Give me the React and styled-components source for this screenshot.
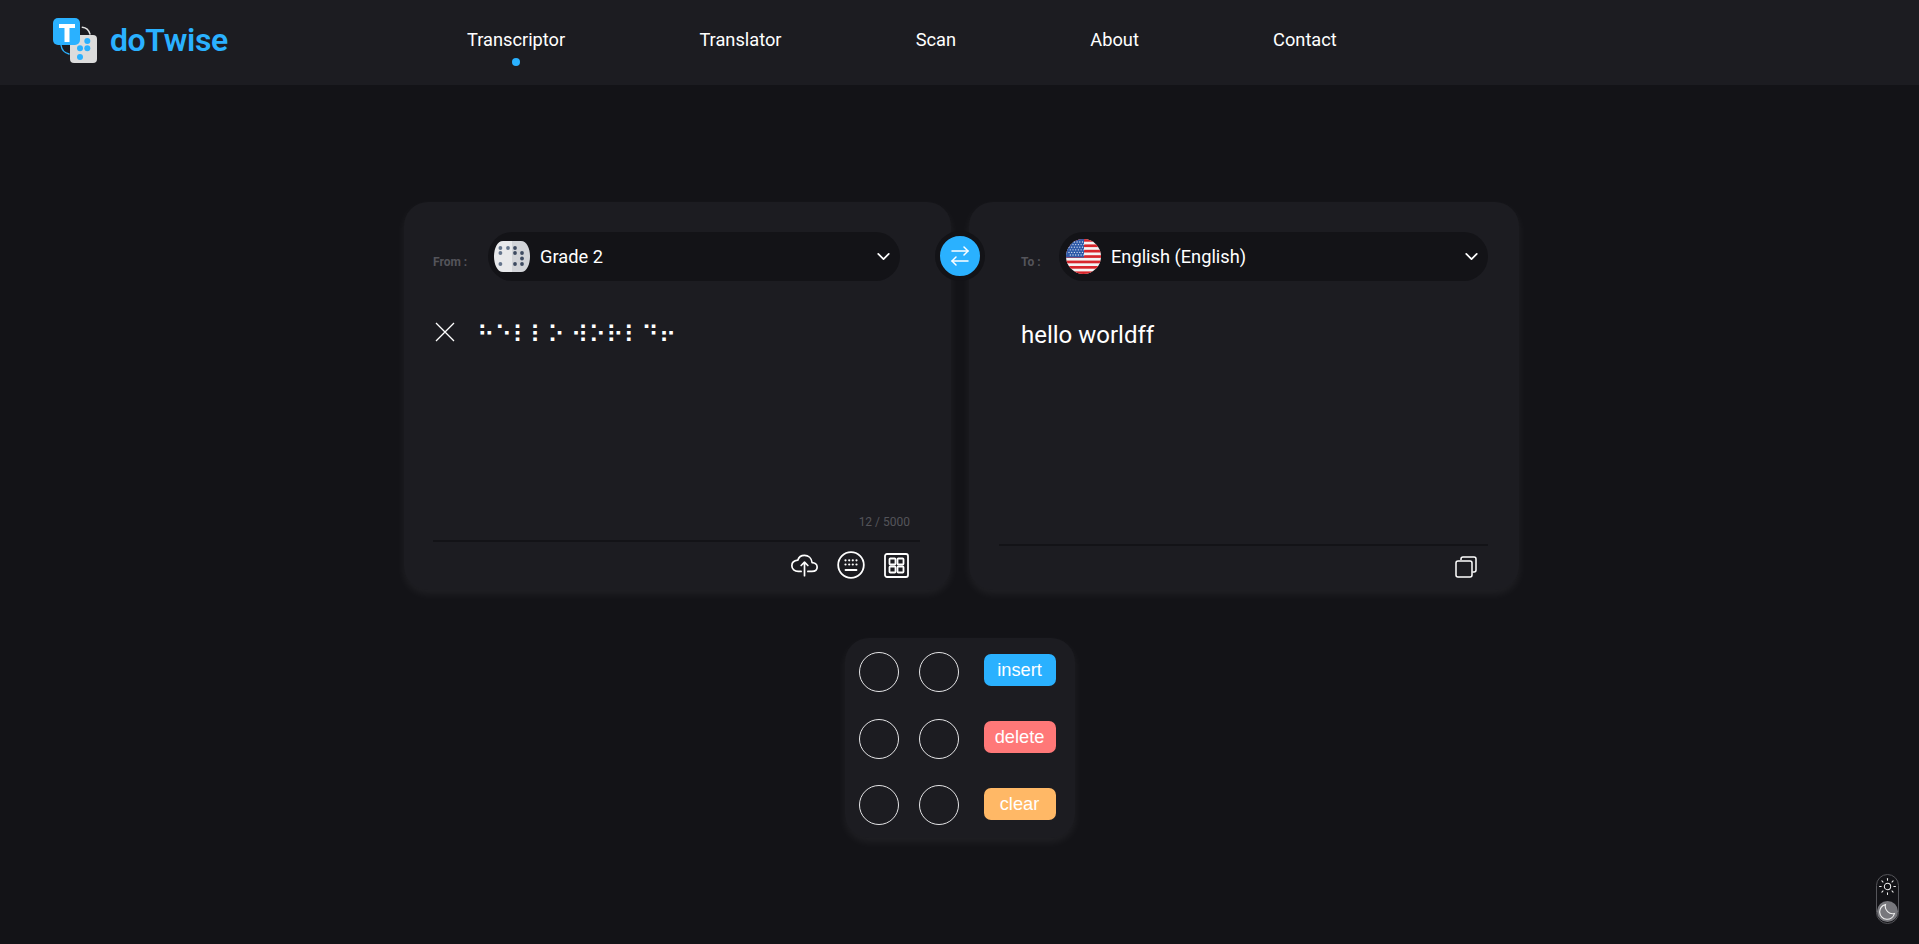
import React from "react";
import styled, { createGlobalStyle } from "styled-components";
import { ArrowRightLeft, ChevronDown, Sun } from "lucide-react";
import { IoCloudUploadOutline } from "react-icons/io5";

const GlobalStyle = createGlobalStyle`
  html, body {
    margin: 0;
    padding: 0;
    background: #131317;
    overflow: hidden;
  }
  * {
    box-sizing: border-box;
  }
  body {
    font-family: Roboto, "Liberation Sans", sans-serif;
    color: #fff;
  }
`;

const Page = styled.div`
  min-height: 944px;
  display: flex;
  flex-direction: column;
  align-items: stretch;
`;

const Header = styled.header`
  height: 85px;
  background: #1c1c21;
  display: flex;
  align-items: center;
  padding-left: 53px;
`;

const Brand = styled.div`
  display: flex;
  align-items: center;
  gap: 12px;
  width: 414px;
  margin-top: -4px;
`;

const BrandName = styled.span`
  font-size: 32px;
  font-weight: 600;
  letter-spacing: -0.4px;
  margin-top: -2px;
  color: #2ab1ff;
`;

const Nav = styled.nav`
  display: flex;
  gap: 134.2px;
`;

const NavLink = styled.a`
  position: relative;
  font-size: 18.24px;
  line-height: 24px;
  margin-top: -6px;
  color: #fff;

  ${(p) =>
    p.$active &&
    `
    &::after {
      content: "";
      position: absolute;
      left: 50%;
      top: 30px;
      width: 8px;
      height: 8px;
      margin-left: -4px;
      border-radius: 50%;
      background: #2ab1ff;
    }
  `}
`;

const Main = styled.main`
  display: flex;
  flex-direction: column;
  align-items: center;
  padding-top: 117px;
`;

const Panels = styled.section`
  position: relative;
  display: flex;
  gap: 18px;
  margin-left: 4px;
`;

const Card = styled.div`
  background: #1c1c21;
  border-radius: 24px;
  box-shadow: 0 4px 10px rgba(255, 255, 255, 0.06);
`;

const Panel = styled(Card)`
  width: ${(p) => p.$width}px;
  height: 388px;
  padding: 30px 31px 0 ${(p) => p.$left}px;
  display: flex;
  flex-direction: column;
`;

const SelectRow = styled.div`
  display: flex;
  align-items: center;
  padding: 0 ${(p) => p.$right || 0}px 0 ${(p) => p.$indent || 0}px;
`;

const SideLabel = styled.span`
  width: ${(p) => p.$width}px;
  font-size: 12px;
  font-weight: 700;
  color: #54545a;
  margin-top: 10px;
`;

const Select = styled.div`
  flex: 1;
  height: 49px;
  border-radius: 25px;
  background: #131317;
  display: flex;
  align-items: center;
  padding: 0 6px 0 ${(p) => p.$left}px;
  font-size: 18.24px;
  gap: ${(p) => p.$gap}px;
`;

const SelectText = styled.span`
  flex: 1;
`;

const Editor = styled.div`
  flex: 1;
  display: flex;
  flex-direction: column;
  justify-content: space-between;
  padding-top: 34px;
`;

const SourceLine = styled.div`
  display: flex;
  align-items: center;
  height: 34px;
  gap: 20px;
`;

const Braille = styled.span`
  font-family: Roboto, "DejaVu Sans", sans-serif;
  font-size: 24px;
  line-height: 34px;
  margin-top: 6px;
  color: #fff;
`;

const Output = styled.div`
  font-size: 24px;
  line-height: 34px;
  padding-left: 22px;
  margin-top: 3px;
`;

const Count = styled.div`
  align-self: flex-end;
  font-size: 12px;
  line-height: 14px;
  color: #54545a;
  margin: 0 10px 11px 0;
`;

const Toolbar = styled.div`
  height: ${(p) => p.$height}px;
  border-top: 2px solid #131317;
  display: flex;
  align-items: center;
  justify-content: flex-end;
  gap: ${(p) => p.$gap || 20}px;
  padding-right: ${(p) => p.$right}px;
  padding-bottom: ${(p) => p.$bottom || 0}px;
`;

const SwapButton = styled.button`
  position: absolute;
  left: 531px;
  top: 29px;
  width: 50px;
  height: 50px;
  border-radius: 50%;
  border: 5px solid #131317;
  background: #2ab1ff;
  color: #fff;
  padding: 0;
  display: flex;
  align-items: center;
  justify-content: center;
`;

const Keypad = styled(Card)`
  width: 230px;
  height: 200px;
  margin-top: 48px;
  padding: 14px 19px 13px 14px;
  display: grid;
  grid-template-columns: 40px 40px 72px;
  grid-template-rows: repeat(3, 40px);
  column-gap: 20px;
  row-gap: 26.5px;
  align-items: center;
`;

const Dot = styled.button`
  width: 40px;
  height: 40px;
  border-radius: 50%;
  border: 1px solid #e4e4e6;
  background: transparent;
  padding: 0;
`;

const Action = styled.button`
  width: 72px;
  height: 32px;
  margin: ${(p) => p.$top}px 0 0 5px;
  border: none;
  border-radius: 7px;
  background: ${(p) => p.$color};
  color: #fff;
  font-family: "Liberation Sans", Arial, sans-serif;
  font-size: 18.24px;
  padding: 0;
`;

const ThemeToggle = styled.div`
  position: fixed;
  right: 20px;
  bottom: 20px;
  width: 23px;
  height: 50px;
  border: 1px solid #55555a;
  border-radius: 12px;
  display: flex;
  flex-direction: column;
  align-items: center;
  justify-content: space-between;
  padding: 2px 0 1px;
  background: #131317;
`;

const MoonKnob = styled.div`
  width: 21px;
  height: 21px;
  border-radius: 50%;
  background: #77777c;
  display: flex;
  align-items: center;
  justify-content: center;
`;

const Logo = () => (
  <svg width="45" height="45" viewBox="0 0 45 45" fill="none">
    <path d="M29.300 9.300c3.500 0.300 6.500 2.800 7.700 6.700" stroke="#e0e0e0" strokeWidth="1.400" strokeLinecap="round" />
    <path d="M8 27c0.600 4.500 3.500 8 8 9" stroke="#2ab1ff" strokeWidth="1.400" strokeLinecap="round" />
    <rect x="17" y="17" width="27" height="28" rx="4" fill="#dcdcdc" />
    <circle cx="34.300" cy="23" r="3" fill="#2ab1ff" />
    <circle cx="34.300" cy="30.300" r="3" fill="#2ab1ff" />
    <circle cx="27" cy="30.300" r="3" fill="#2ab1ff" />
    <circle cx="27" cy="39" r="3" fill="#2ab1ff" />
    <rect x="0" y="0" width="27" height="27" rx="5" fill="#2ab1ff" />
    <path d="M6 6h16v4h-5.500v14h-5V10H6z" fill="#fff" />
  </svg>
);

const BrailleDice = () => {
  const light = [[6.400, 7], [14, 7], [6.400, 12], [6.400, 23]];
  const dark = [[21, 7], [21, 12], [28, 12], [28, 17.500], [21, 23], [28, 23]];
  return (
    <svg width="36" height="31" viewBox="0 0 36 31">
      <path d="M18 0H9C3 0 0 8 0 15.500S3 31 9 31h9z" fill="#e8e9eb" />
      <path d="M18 0h9c6 0 9 8 9 15.500S33 31 27 31h-9z" fill="#d2d4d8" />
      {light.map(([cx, cy]) => (
        <circle key={`${cx}-${cy}`} cx={cx} cy={cy} r="1.900" fill="#64748b" />
      ))}
      {dark.map(([cx, cy]) => (
        <circle key={`${cx}-${cy}`} cx={cx} cy={cy} r="1.900" fill="#3d4a60" />
      ))}
    </svg>
  );
};

const UsFlag = () => {
  const stars = [];
  for (let row = 0; row < 6; row++) {
    for (let col = 0; col < 6; col++) {
      stars.push(
        <circle
          key={`${row}-${col}`}
          cx={3 + col * 2.700 + (row % 2) * 1.300}
          cy={3 + row * 2.600}
          r="0.650"
          fill="#d9e2f2"
        />
      );
    }
  }
  return (
    <svg width="35" height="35" viewBox="0 0 35 35">
      <defs>
        <clipPath id="flag-clip">
          <circle cx="17.500" cy="17.500" r="17.500" />
        </clipPath>
      </defs>
      <g clipPath="url(#flag-clip)">
        <rect width="35" height="35" fill="#f4f4f4" />
        {[0, 5.400, 10.800, 16.200, 21.600, 27, 32.400].map((y) => (
          <rect key={y} y={y} width="35" height="2.700" fill="#d8262c" />
        ))}
        <rect width="18" height="18.500" fill="#2f5aa8" />
        {stars}
      </g>
    </svg>
  );
};

const CloseIcon = () => (
  <svg width="24" height="24" viewBox="0 0 24 24" fill="none" stroke="#fff" strokeWidth="1.300">
    <path d="M3 3l18 18M21 3L3 21" />
  </svg>
);

const KeyboardIcon = () => (
  <svg width="28" height="28" viewBox="0 0 28 28" fill="none" stroke="#fff" strokeWidth="1.800">
    <circle cx="14" cy="14" r="12.800" />
    <g fill="#fff" stroke="none">
      {[8.500, 12.200, 15.800, 19.500].map((x) => (
        <circle key={`a${x}`} cx={x} cy="9.300" r="1.100" />
      ))}
      {[8.500, 12.200, 15.800, 19.500].map((x) => (
        <circle key={`b${x}`} cx={x} cy="13.500" r="1.100" />
      ))}
    </g>
    <path d="M8.500 19h11" strokeLinecap="round" />
  </svg>
);

const GridIcon = () => (
  <svg width="25" height="25" viewBox="0 0 25 25" fill="none" stroke="#fff" strokeWidth="1.800">
    <rect x="1" y="1" width="23" height="23" rx="2" />
    <rect x="5.500" y="5.500" width="6" height="6" rx="0.800" />
    <rect x="13.500" y="5.500" width="6" height="6" rx="0.800" />
    <rect x="5.500" y="13.500" width="6" height="6" rx="0.800" />
    <rect x="13.500" y="13.500" width="6" height="6" rx="0.800" />
  </svg>
);

const CopyIcon = () => (
  <svg width="22" height="22" viewBox="0 0 22 22" fill="none" stroke="#fff" strokeWidth="1.500">
    <path d="M6 4V3a2 2 0 0 1 2-2h11a2 2 0 0 1 2 2v11a2 2 0 0 1-2 2h-1.500" />
    <rect x="1" y="5" width="16" height="16" rx="2" />
  </svg>
);

const MoonIcon = () => (
  <svg width="17" height="17" viewBox="0 0 17 17" fill="none" stroke="#f0f0f0" strokeWidth="1.100">
    <path d="M6.500 1.500a7.500 7.500 0 1 0 9 9c-5 1.500-10.500-3.500-9-9z" />
  </svg>
);

const navItems = ["Transcriptor", "Translator", "Scan", "About", "Contact"];
const actions = [
  { label: "insert", color: "#2ab1ff", top: -4 },
  { label: "delete", color: "#ff7878", top: -4 },
  { label: "clear", color: "#ffb866", top: -2 },
];

export default function App() {
  return (
    <Page>
      <GlobalStyle />
      <Header>
        <Brand>
          <Logo />
          <BrandName>doTwise</BrandName>
        </Brand>
        <Nav>
          {navItems.map((item, i) => (
            <NavLink key={item} $active={i === 0}>
              {item}
            </NavLink>
          ))}
        </Nav>
      </Header>
      <Main>
        <Panels>
          <Panel $width={547} $left={29}>
            <SelectRow $right={20}>
              <SideLabel $width={55}>From :</SideLabel>
              <Select $left={6} $gap={10}>
                <BrailleDice />
                <SelectText>Grade 2</SelectText>
                <ChevronDown size={21} strokeWidth={2} />
              </Select>
            </SelectRow>
            <Editor>
              <SourceLine>
                <CloseIcon />
                <Braille>⠓⠑⠇⠇⠕ ⠺⠕⠗⠇⠙⠖</Braille>
              </SourceLine>
              <Count>12 / 5000</Count>
            </Editor>
            <Toolbar $height={50} $right={11} $gap={19} $bottom={2}>
              <IoCloudUploadOutline size={27} />
              <KeyboardIcon />
              <GridIcon />
            </Toolbar>
          </Panel>
          <Panel $width={550} $left={30}>
            <SelectRow $indent={22}>
              <SideLabel $width={38}>To :</SideLabel>
              <Select $left={7} $gap={10}>
                <UsFlag />
                <SelectText>English (English)</SelectText>
                <ChevronDown size={21} strokeWidth={2} />
              </Select>
            </SelectRow>
            <Editor>
              <Output>hello worldff</Output>
            </Editor>
            <Toolbar $height={46} $right={11} $bottom={2}>
              <CopyIcon />
            </Toolbar>
          </Panel>
          <SwapButton>
            <ArrowRightLeft size={24} strokeWidth={1.500} />
          </SwapButton>
        </Panels>
        <Keypad>
          {actions.map((action) => (
            <React.Fragment key={action.label}>
              <Dot />
              <Dot />
              <Action $color={action.color} $top={action.top}>
                {action.label}
              </Action>
            </React.Fragment>
          ))}
        </Keypad>
      </Main>
      <ThemeToggle>
        <Sun size={19} strokeWidth={1.300} color="#f0f0f0" />
        <MoonKnob>
          <MoonIcon />
        </MoonKnob>
      </ThemeToggle>
    </Page>
  );
}
